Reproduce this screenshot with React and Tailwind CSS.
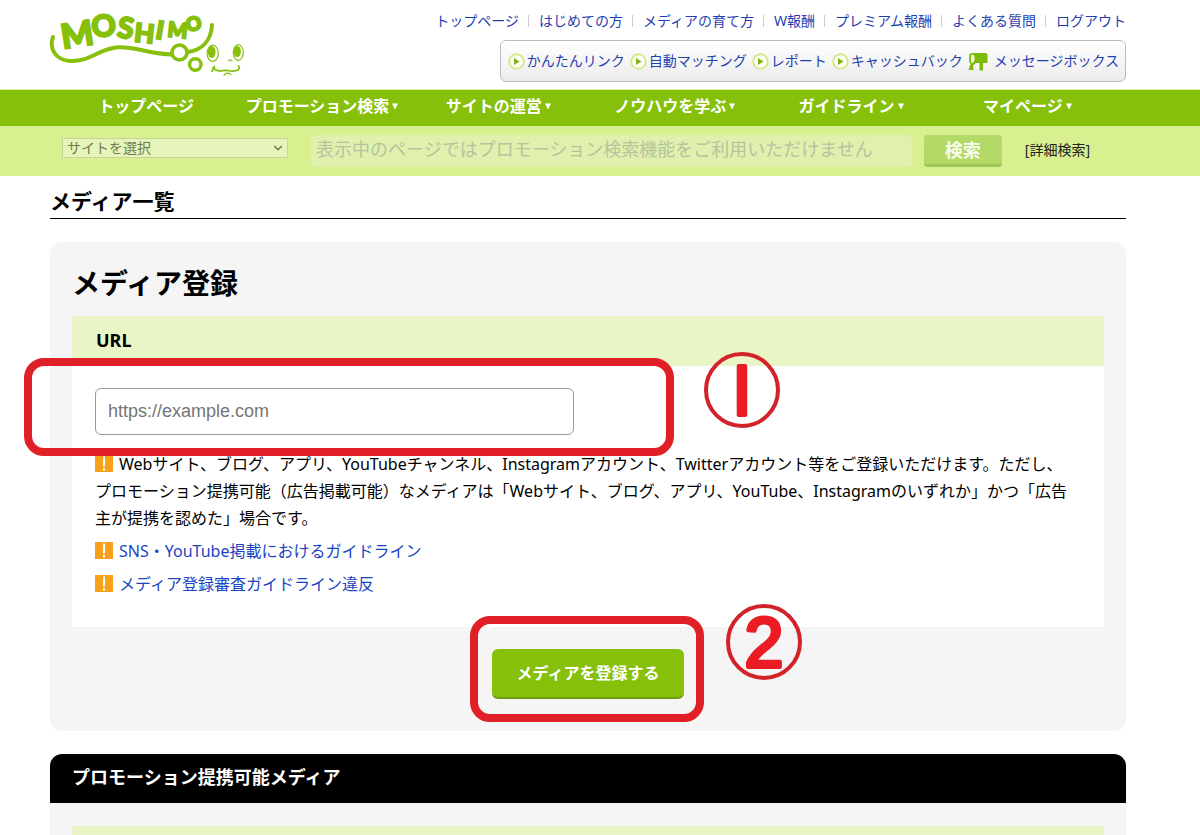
import React, { useState } from 'react';
import { ChevronDown } from 'lucide-react';

const topLinks = [
  'トップページ',
  'はじめての方',
  'メディアの育て方',
  'W報酬',
  'プレミアム報酬',
  'よくある質問',
  'ログアウト',
];

const toolLinks = ['かんたんリンク', '自動マッチング', 'レポート', 'キャッシュバック'];

const mainNav = [
  { label: 'トップページ', menu: false },
  { label: 'プロモーション検索', menu: true },
  { label: 'サイトの運営', menu: true },
  { label: 'ノウハウを学ぶ', menu: true },
  { label: 'ガイドライン', menu: true },
  { label: 'マイページ', menu: true },
];

const logoLetters = [
  { char: 'M', x: 79, y: 46.5, size: 34, rotate: -9 },
  { char: 'O', x: 104.5, y: 36.5, size: 30, rotate: -4 },
  { char: 'S', x: 124.5, y: 38, size: 29, rotate: 8 },
  { char: 'H', x: 143.5, y: 42.5, size: 26, rotate: 6 },
  { char: 'I', x: 158.5, y: 39, size: 25, rotate: 10 },
  { char: 'M', x: 177, y: 37.5, size: 21, rotate: 6 },
  { char: 'O', x: 195, y: 30.5, size: 19, rotate: -12 },
];

const Logo = () => (
  <svg viewBox="46 0 204 82" className="w-[204px] h-[82px]" role="img" aria-label="MOSHIMO">
    <g fill="#86c00b" stroke="#86c00b" strokeWidth="2" fontFamily="Lato, sans-serif" fontWeight="900" textAnchor="middle">
      {logoLetters.map((l, i) => (
        <text key={i} x={l.x} y={l.y} fontSize={l.size} transform={`rotate(${l.rotate} ${l.x} ${l.y})`}>
          {l.char}
        </text>
      ))}
    </g>
    <g fill="none" stroke="#86c00b" strokeLinecap="round">
      <path d="M53 37C49 48 55 60 70 61C90 62 99 49 116 47.500C134 46 149 54 172 54.500" strokeWidth="4" />
      <path d="M188 52C202 50 211 41 212 25" strokeWidth="4" />
      <circle cx="179.500" cy="52.500" r="7.500" strokeWidth="3.600" />
      <circle cx="195.300" cy="64.500" r="5.700" strokeWidth="3.400" />
      <ellipse cx="212.700" cy="53.300" rx="5.600" ry="8.200" strokeWidth="1.200" />
      <ellipse cx="238.300" cy="52.500" rx="5" ry="7.800" strokeWidth="1.200" />
      <path d="M213 67.500C217 73 222 70 228 70.500C234 72 242 70 238.500 66M212 71L214.500 66.500" strokeWidth="1.800" />
      <path d="M224 75C226 73 229 73 231 74.500M228.500 60.800C230 59.300 231.500 60 232 61" strokeWidth="1.200" />
    </g>
    <ellipse cx="211.700" cy="52" rx="3.900" ry="6" fill="#86c00b" />
    <ellipse cx="237.300" cy="51.500" rx="3.600" ry="5.600" fill="#86c00b" />
  </svg>
);

const PlayIcon = () => (
  <svg viewBox="0 0 17 17" className="w-[17px] h-[17px]" aria-hidden="true">
    <circle cx="8.500" cy="8.500" r="7.300" fill="#fdfef8" stroke="#d3ea8c" strokeWidth="2" />
    <path d="M6 5L11.500 8.500L6 12Z" fill="#7fb317" />
  </svg>
);

const MailboxIcon = () => (
  <svg viewBox="0 0 20 19" className="w-5 h-[19px]" aria-hidden="true">
    <path d="M4 1H17.500C19 1 19.500 2 19.500 3.500V11H15V18.500H11.500V11H7V5Z" fill="#7cba0a" />
    <path d="M4 1C7 1 8 3 8 5V11L5 13.500L5.500 18H0.500L2.500 12L1.200 10V4C1.200 2 2 1 4 1Z" fill="#7cba0a" />
    <path d="M4.500 2.500C6 2.700 6.600 4 6.500 6V9L3.500 11.500L3 9V5C3 3.500 3.500 2.500 4.500 2.500Z" fill="#f2f7e2" />
  </svg>
);

const NoticeIcon = () => (
  <svg viewBox="0 0 18 17" className="inline-block w-[18px] h-[17px] mr-[6px] align-[-2px]" aria-hidden="true">
    <rect width="18" height="17" fill="#f9a01b" />
    <path d="M9 1.500V11.500M9 13V15.500" stroke="#fff" strokeWidth="2" />
  </svg>
);

// Numbered step marker drawn over the page
const StepNumber = ({ glyph, label, className }) => (
  <svg viewBox="0 0 78 78" className={`absolute w-[78px] h-[78px] ${className}`} role="img" aria-label={label}>
    <circle cx="39" cy="39" r="36" fill="none" stroke="#d2232a" strokeWidth="4" />
    <text
      x="39"
      y="64"
      fontSize="70"
      fontFamily="'Liberation Sans', sans-serif"
      textAnchor="middle"
      fill="#eb1c24"
      stroke="#eb1c24"
      strokeWidth="4"
      strokeLinejoin="round"
    >
      {glyph}
    </text>
  </svg>
);

const Header = () => (
  <header className="flex justify-between pl-[46px] pr-[74px] border-b border-[#d8f08f]">
    <a href="#">
      <Logo />
    </a>
    <div className="flex flex-col items-end pt-[11px] pb-[7px] text-sm leading-5 text-[#1f3fae] whitespace-nowrap">
      <ul className="flex">
        {topLinks.map((label, i) => (
          <li key={label} className="flex items-center">
            {i > 0 && <span className="w-px h-3 ml-[9px] mr-[10px] bg-[#ccc]" />}
            <a href="#">{label}</a>
          </li>
        ))}
      </ul>
      <ul className="mt-[9px] h-[42px] flex items-center gap-[5px] pl-[7px] pr-[6px] border border-[#b9bbbd] rounded-md bg-linear-to-b from-white to-[#ececec]">
        {toolLinks.map((label) => (
          <li key={label}>
            <a href="#" className="flex items-center gap-[2px]">
              <PlayIcon />
              {label}
            </a>
          </li>
        ))}
        <li>
          <a href="#" className="flex items-center gap-[6px]">
            <MailboxIcon />
            メッセージボックス
          </a>
        </li>
      </ul>
    </div>
  </header>
);

const MainNav = () => (
  <nav className="bg-[#86c00b] pl-[58px] pr-[84px]">
    <ul className="grid grid-cols-6 h-9 pb-1">
      {mainNav.map((item) => (
        <li key={item.label} className="flex items-center justify-center">
          <a href="#" className="flex items-center gap-[2px] font-bold text-base text-white whitespace-nowrap">
            {item.label}
            {item.menu && (
              <svg viewBox="0 0 8 7" className="w-2 h-[7px]" aria-hidden="true">
                <path d="M1 0.500H7L4 6.500Z" fill="#fff" />
              </svg>
            )}
          </a>
        </li>
      ))}
    </ul>
  </nav>
);

const SearchBar = () => (
  <form className="flex items-start bg-[#d8f08f] pl-[62px] pr-[110px] pt-[9px] pb-[9px]" onSubmit={(e) => e.preventDefault()}>
    <div className="relative w-[226px] mt-[3px]">
      <select
        aria-label="サイトを選択"
        disabled
        className="block appearance-none w-full h-5 pl-1 border border-[#c5d39c] bg-[#e5f4b8] text-sm leading-[18px] text-[#6f7a55]"
      >
        <option>サイトを選択</option>
      </select>
      <ChevronDown className="absolute right-[3px] top-[3px] w-[14px] h-[14px] text-[#63704a] pointer-events-none" />
    </div>
    <input
      type="text"
      aria-label="プロモーション検索"
      disabled
      placeholder="表示中のページではプロモーション検索機能をご利用いただけません"
      className="ml-[23px] flex-1 min-w-0 h-8 px-[5px] pb-1 rounded bg-[#dff1ad] text-lg placeholder:text-[#b7c39f]"
    />
    <button type="submit" disabled className="ml-3 w-[78px] h-8 rounded bg-[#b3d966] border-b-3 border-[#a0c65a] text-lg leading-7 font-bold text-[#f9fdee]">
      検索
    </button>
    <a href="#" className="ml-[23px] mt-[5px] text-sm leading-5 text-[#222] whitespace-nowrap">
      [詳細検索]
    </a>
  </form>
);

const RegisterCard = () => {
  const [url, setUrl] = useState('');

  return (
    <section className="mt-[23px] rounded-xl bg-[#f5f5f5] px-[22px] pt-[23px] pb-8">
      <h2 className="font-bold text-[28px] leading-9">メディア登録</h2>
      <form onSubmit={(e) => e.preventDefault()}>
        <div className="mt-[15px] bg-[#e9f5c6] px-6 pt-[10px] pb-3">
          <label htmlFor="media-url" className="block font-bold text-lg leading-7">
            URL
          </label>
        </div>
        <div className="bg-white px-[23px] pt-[22px] pb-[29px]">
          <div className="relative">
            <input
              id="media-url"
              type="text"
              value={url}
              onChange={(e) => setUrl(e.target.value)}
              placeholder="https://example.com"
              className="block w-[479px] h-[47px] px-3 rounded-md border border-[#999] font-['Liberation_Sans',sans-serif] text-lg placeholder:text-[#757575]"
            />
            <div className="absolute z-10 -left-[71px] -top-[30px] w-[650px] h-[98px] border-8 border-[#e01f26] rounded-[20px] pointer-events-none" />
            <StepNumber glyph="I" label="1" className="left-[608px] -top-[37px]" />
          </div>
          <div className="mt-4 pr-2 text-base">
            <p className="leading-[27px]">
              <NoticeIcon />
              Webサイト、ブログ、アプリ、YouTubeチャンネル、Instagramアカウント、Twitterアカウント等をご登録いただけます。ただし、プロモーション提携可能（広告掲載可能）なメディアは「Webサイト、ブログ、アプリ、YouTube、Instagramのいずれか」かつ「広告主が提携を認めた」場合です。
            </p>
            <p className="mt-[6px] leading-[27px]">
              <NoticeIcon />
              <a href="#" className="text-[#1a44c2]">SNS・YouTube掲載におけるガイドライン</a>
            </p>
            <p className="mt-[6px] leading-[27px]">
              <NoticeIcon />
              <a href="#" className="text-[#1a44c2]">メディア登録審査ガイドライン違反</a>
            </p>
          </div>
        </div>
        <div className="mt-[22px] flex justify-center">
          <div className="relative">
            <button type="submit" className="block w-48 h-[50px] rounded-md bg-[#86c00b] border-b-2 border-[#6c9d12] font-bold text-base text-white">
              メディアを登録する
            </button>
            <div className="absolute -left-[22px] -top-[33px] w-[234px] h-[106px] border-8 border-[#e01f26] rounded-[20px] pointer-events-none" />
            <StepNumber glyph="2" label="2" className="left-[233px] -top-[46px]" />
          </div>
        </div>
      </form>
    </section>
  );
};

export default function App() {
  return (
    <div className="bg-white text-black font-['Noto_Sans','Noto_Sans_CJK_JP',sans-serif]">
      <Header />
      <MainNav />
      <SearchBar />
      <main className="pl-[50px] pr-[74px]">
        <h1 className="pt-[11px] pb-[3px] border-b border-black font-bold text-[21px] leading-7">メディア一覧</h1>
        <RegisterCard />
        <section className="mt-[23px] rounded-t-xl overflow-hidden bg-[#f5f5f5]">
          <h2 className="bg-black px-[22px] pt-[9px] pb-3 font-bold text-lg leading-7 text-white">プロモーション提携可能メディア</h2>
          <div className="px-[22px] pt-[23px]">
            <div className="h-[9px] bg-[#e9f5c6]" />
          </div>
        </section>
      </main>
    </div>
  );
}
